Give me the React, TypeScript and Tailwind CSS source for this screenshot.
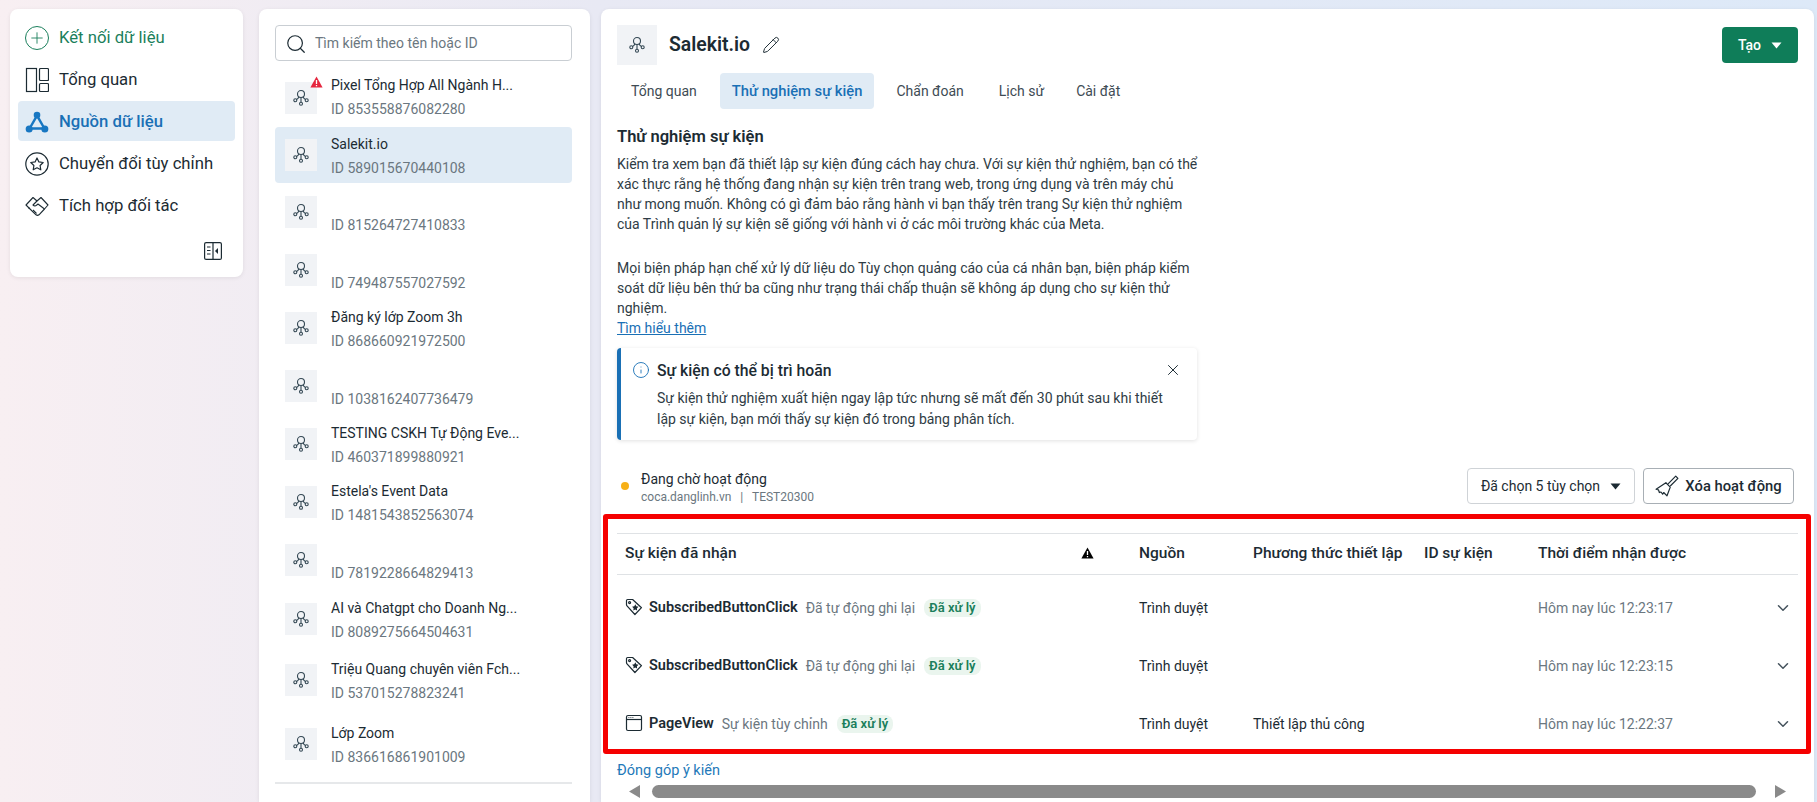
import { ChevronDown, Info, Pencil, Plus, Search, X } from "lucide-react";

const FONT = "font-['Roboto','Noto_Sans',sans-serif]";

const pixels = [
  { name: "Pixel Tổng Hợp All Ngành H...", id: "853558876082280", warn: true, h: "h-[58px]" },
  { name: "Salekit.io", id: "589015670440108", active: true, h: "h-[56px]" },
  { name: "", id: "815264727410833", h: "h-[58px]" },
  { name: "", id: "749487557027592", h: "h-[58px]" },
  { name: "Đăng ký lớp Zoom 3h", id: "868660921972500", h: "h-[58px]" },
  { name: "", id: "1038162407736479", h: "h-[58px]" },
  { name: "TESTING CSKH Tự Động Eve...", id: "460371899880921", h: "h-[58px]" },
  { name: "Estela's Event Data", id: "1481543852563074", h: "h-[58px]" },
  { name: "", id: "7819228664829413", h: "h-[58px]" },
  { name: "AI và Chatgpt cho Doanh Ng...", id: "8089275664504631", h: "h-[60px]" },
  { name: "Triệu Quang chuyên viên Fch...", id: "537015278823241", h: "h-[62px]" },
  { name: "Lớp Zoom", id: "836616861901009", h: "h-[66px]" },
];

const rows = [
  { icon: "tag", name: "SubscribedButtonClick", kind: "Đã tự động ghi lại", setup: "", time: "Hôm nay lúc 12:23:17" },
  { icon: "tag", name: "SubscribedButtonClick", kind: "Đã tự động ghi lại", setup: "", time: "Hôm nay lúc 12:23:15" },
  { icon: "page", name: "PageView", kind: "Sự kiện tùy chỉnh", setup: "Thiết lập thủ công", time: "Hôm nay lúc 12:22:37" },
];

function NodeIcon() {
  return (
    <svg width="18" height="18" viewBox="0 0 18 18" fill="none" stroke="#344854" strokeWidth="1.1">
      <circle cx="9" cy="5" r="3.5" />
      <path d="M7 7.800C6.500 9 6 9.800 4.600 10.500M11 7.800c.5 1.200 1 2 2.400 2.700M9 8.500v4.800" />
      <circle cx="3.300" cy="11.300" r="1.500" />
      <circle cx="14.700" cy="11.300" r="1.500" />
      <circle cx="9" cy="14.800" r="1.500" />
    </svg>
  );
}

function TagIcon() {
  return (
    <svg width="18" height="18" viewBox="0 0 18 18" fill="none" stroke="#1c2b33" strokeWidth="1.2">
      <path d="M1.500 2.600c0-.6.5-1.100 1.100-1.100h5l8.900 8.200-6.600 6.800-7.900-8.600c-.3-.3-.5-.7-.5-1.100z" strokeLinejoin="round" />
      <circle cx="4.600" cy="4.600" r="1" />
      <path d="m10.300 6.200 1 2 2.200.5-1.600 1.500.2 2.200-1.900-.9-1.900 1 .3-2.200-1.500-1.500 2.200-.5z" fill="#1c2b33" stroke="none" />
    </svg>
  );
}

function PageIcon() {
  return (
    <svg width="18" height="18" viewBox="0 0 18 18" fill="none" stroke="#1c2b33" strokeWidth="1.2">
      <rect x="1.500" y="1.500" width="15" height="15" rx="1.500" />
      <path d="M1.500 5.500h15" />
      <path d="M3.500 3.500h.8M5.500 3.500h.8M7.500 3.500h.8" />
    </svg>
  );
}

function NavIcon({ kind }: { kind: string }) {
  if (kind === "overview")
    return (
      <svg width="24" height="26" viewBox="0 0 24 26" fill="none" stroke="#1c2b33" strokeWidth="1.2">
        <rect x="1.500" y="1.500" width="10" height="23" />
        <rect x="14.500" y="1.500" width="9" height="12" rx="1" />
        <rect x="14.500" y="16.500" width="9" height="8" rx="1" />
      </svg>
    );
  if (kind === "source")
    return (
      <svg width="24" height="24" viewBox="0 0 26 24" fill="#1877c2" stroke="#1877c2">
        <path d="M13 5 5 19h16z" fill="none" strokeWidth="2.600" />
        <circle cx="13" cy="4.500" r="3.600" stroke="none" />
        <circle cx="4.500" cy="19.500" r="3.800" stroke="none" />
        <circle cx="21.500" cy="19.500" r="3.800" stroke="none" />
      </svg>
    );
  if (kind === "star")
    return (
      <svg width="24" height="24" viewBox="0 0 24 24" fill="none" stroke="#1c2b33" strokeWidth="1.2">
        <circle cx="12" cy="12" r="11.200" />
        <path d="m12 6 1.900 3.900 4.300.6-3.100 3 .7 4.300-3.800-2-3.800 2 .7-4.300-3.100-3 4.300-.6z" strokeLinejoin="round" />
      </svg>
    );
  return (
    <svg width="24" height="20" viewBox="0 0 24 20" fill="none" stroke="#1c2b33" strokeWidth="1.1" strokeLinejoin="round">
      <path d="M1 9 8 1.500l4 3.500 4-3.500L23 9l-3.500 4L14 18.800c-1 .8-2 .8-3 0L4.500 12.500z" />
      <path d="M12 5 8 9c1.200 1.200 2.500 1.200 3.500.2L13 8l6.500 5" />
      <path d="m4.500 12.500-1-1M8 14l3.500 3.500" />
    </svg>
  );
}

function Sidebar() {
  const item = "flex h-10 items-center gap-[10px] rounded-[4px] pl-[7px] pt-[2px] text-[16.7px]";
  return (
    <aside className="flex h-[268px] w-[233px] shrink-0 flex-col rounded-[8px] bg-white px-[8px] pt-[8px] shadow-[0_1px_4px_rgba(0,0,0,0.08)]">
      <div className={`${item} mb-[2px] text-[#1b7f5c]`}>
        <span className="flex h-6 w-6 items-center justify-center rounded-full border border-[#1b7f5c]">
          <Plus size={18} strokeWidth={1.2} />
        </span>
        Kết nối dữ liệu
      </div>
      <div className={`${item} mb-[2px] text-[#1c2b33]`}>
        <NavIcon kind="overview" />
        Tổng quan
      </div>
      <div className={`${item} mb-[2px] bg-[#e0ebf5] font-medium text-[#1a70b5]`}>
        <NavIcon kind="source" />
        Nguồn dữ liệu
      </div>
      <div className={`${item} mb-[2px] text-[#1c2b33]`}>
        <NavIcon kind="star" />
        Chuyển đổi tùy chỉnh
      </div>
      <div className={`${item} text-[#1c2b33]`}>
        <NavIcon kind="deal" />
        Tích hợp đối tác
      </div>
      <div className="mt-[17px] flex justify-end pr-[13px]">
        <svg width="18" height="18" viewBox="0 0 18 18" fill="none" stroke="#1c2b33" strokeWidth="1.2">
          <rect x="0.600" y="0.600" width="16.800" height="16.800" rx="1.500" />
          <path d="M9 .6v16.800M3 5h3.500M3 8.500h3.500M3 12h3.500" />
          <path d="M14 6v6l-3-3z" fill="#1c2b33" stroke="none" />
        </svg>
      </div>
    </aside>
  );
}

function PixelList() {
  return (
    <section className="h-[793px] w-[331px] shrink-0 rounded-t-[8px] bg-white px-[16px] pt-[16px] shadow-[0_1px_4px_rgba(0,0,0,0.08)]">
      <div className="flex h-[36px] w-[297px] items-center gap-[8px] rounded-[4px] border border-[#c9ced3] px-[9px] pt-px text-[14px] text-[#6b7780]">
        <Search size={22} strokeWidth={1.3} className="text-[#1c2b33]" />
        Tìm kiếm theo tên hoặc ID
      </div>
      <div className="mt-[8px] w-[297px]">
        {pixels.map((p) => (
          <div
            key={p.id}
            className={`flex items-center gap-[14px] rounded-[4px] pl-[10px] ${p.h} ${p.active ? "bg-[#e0ebf5]" : ""}`}
          >
            <div className="relative flex h-[32px] w-[32px] shrink-0 items-center justify-center bg-[#f1f3f6]">
              <NodeIcon />
              {p.warn && (
                <svg className="absolute -right-[6px] -top-[6px]" width="13" height="12" viewBox="0 0 13 12">
                  <path d="M6.500.5 12.600 11.500H.4z" fill="#e5273f" />
                  <path d="M6.500 4v4M6.500 9v1.200" stroke="#fff" strokeWidth="1.300" />
                </svg>
              )}
            </div>
            <div className={`flex h-[44px] flex-col justify-between ${p.warn ? "-mt-[2px]" : "mt-[2px]"}`}>
              <div className="h-[20px] text-[14px] leading-[20px] text-[#1c2b33]">{p.name}</div>
              <div className="text-[14px] leading-[20px] text-[#6b7780]">ID {p.id}</div>
            </div>
          </div>
        ))}
      </div>
      <div className="mt-[5px] h-[2px] w-[297px] bg-[#e6e8ea]" />
    </section>
  );
}

function EventTable() {
  const cols = "grid grid-cols-[456px_58px_114px_171px_114px_244px_16px] items-center";
  return (
    <div className="-ml-[14px] -mr-[13px] mt-[10px] rounded-[3px] border-[5px] border-[#f50000] pb-0 pl-[9px] pr-[8px] pt-[14px]">
      <div className={`${cols} h-[42px] border-y border-[#dfe2e5] pl-[8px] text-[15.5px] font-medium text-[#1c2b33]`}>
        <span>Sự kiện đã nhận</span>
        <span className="-mt-[2px]">
          <svg width="13" height="12" viewBox="0 0 13 12">
            <path d="M6.500.5 12.600 11.500H.4z" fill="#000" />
            <path d="M6.500 4v4M6.500 9v1.200" stroke="#fff" strokeWidth="1.300" />
          </svg>
        </span>
        <span>Nguồn</span>
        <span className="whitespace-nowrap">Phương thức thiết lập</span>
        <span>ID sự kiện</span>
        <span>Thời điểm nhận được</span>
        <span />
      </div>
      <div className="flex flex-col gap-[8px] pt-[8px]">
        {rows.map((r) => (
          <div key={r.time} className={`${cols} h-[50px] pl-[8px] text-[14px]`}>
            <div className="flex items-center">
              <span className="-mt-[2px] mr-[6px] flex w-[18px]">{r.icon === "tag" ? <TagIcon /> : <PageIcon />}</span>
              <span className="text-[14.5px] font-semibold text-[#1c2b33]">{r.name}</span>
              <span className="ml-[8px] text-[#6b7780]">{r.kind}</span>
              <span className="ml-[9px] rounded-[8px] bg-[#eaf5ee] px-[5px] text-[13px] font-semibold leading-[18px] text-[#1b7f5c]">
                Đã xử lý
              </span>
            </div>
            <span />
            <span className="text-[#1c2b33]">Trình duyệt</span>
            <span className="text-[#1c2b33]">{r.setup}</span>
            <span />
            <span className="text-[#6b7780]">{r.time}</span>
            <ChevronDown size={18} strokeWidth={2} className="-ml-[8px] text-[#44525c]" />
          </div>
        ))}
      </div>
    </div>
  );
}

export default function App() {
  return (
    <div
      className={`${FONT} flex h-[802px] gap-[16px] overflow-hidden bg-gradient-to-r from-[#f8eff2] via-[#e8e9f4] via-[33%] to-[#dde9f8] pl-[10px] pt-[9px]`}
    >
      <Sidebar />
      <PixelList />
      <main className="-ml-[5px] h-[793px] w-[1213px] shrink-0 rounded-t-[8px] bg-white pl-[16px] pr-[16px] pt-[16px] shadow-[0_1px_4px_rgba(0,0,0,0.08)]">
        <header className="flex items-start justify-between">
          <div className="flex items-center gap-[12px]">
            <div className="flex h-[40px] w-[40px] items-center justify-center bg-[#f1f3f6]">
              <NodeIcon />
            </div>
            <h1 className="text-[19.4px] font-semibold text-[#1c2b33]">Salekit.io</h1>
            <Pencil size={18} strokeWidth={1.3} className="text-[#1c2b33]" />
          </div>
          <button className="mt-[2px] flex h-[36px] w-[76px] items-center justify-center gap-[10px] rounded-[4px] bg-[#0f7d59] text-[14px] font-medium text-white">
            Tạo
            <svg width="11" height="7" viewBox="0 0 11 7">
              <path d="M.5.5h10L5.500 6.500z" fill="#fff" />
            </svg>
          </button>
        </header>

        <nav className="mt-[8px] flex h-[36px] items-stretch gap-[11px] text-[14px] text-[#3e4b54]">
          <span className="flex items-center pl-[14px] pr-[12px]">Tổng quan</span>
          <span className="-mr-px flex items-center rounded-[4px] bg-[#e0ebf5] px-[12px] text-[14.75px] font-medium text-[#1a70b5]">
            Thử nghiệm sự kiện
          </span>
          <span className="flex items-center px-[12px]">Chẩn đoán</span>
          <span className="flex items-center pl-[12px] pr-[9px]">Lịch sử</span>
          <span className="flex items-center px-[12px]">Cài đặt</span>
        </nav>

        <h2 className="mt-[17px] text-[16.5px] font-semibold leading-[22px] text-[#1c2b33]">Thử nghiệm sự kiện</h2>
        <div className="mt-[6px] w-[590px] text-[14px] leading-[20px] text-[#2f3c45]">
          <p>
            Kiểm tra xem bạn đã thiết lập sự kiện đúng cách hay chưa. Với sự kiện thử nghiệm, bạn có thể
            <br />
            xác thực rằng hệ thống đang nhận sự kiện trên trang web, trong ứng dụng và trên máy chủ
            <br />
            như mong muốn. Không có gì đảm bảo rằng hành vi bạn thấy trên trang Sự kiện thử nghiệm
            <br />
            của Trình quản lý sự kiện sẽ giống với hành vi ở các môi trường khác của Meta.
          </p>
          <p className="mt-[24px]">
            Mọi biện pháp hạn chế xử lý dữ liệu do Tùy chọn quảng cáo của cá nhân bạn, biện pháp kiểm soát dữ liệu bên
            thứ ba cũng như trạng thái chấp thuận sẽ không áp dụng cho sự kiện thử nghiệm.
          </p>
          <a className="text-[#1a70b5] underline">Tìm hiểu thêm</a>
        </div>

        <div className="relative mt-[10px] h-[92px] w-[580px] rounded-[4px] border-l-[4px] border-[#1a70b5] bg-white pl-[36px] pr-[24px] pt-[13px] shadow-[0_1px_4px_rgba(0,0,0,0.12)]">
          <Info size={18} strokeWidth={1.2} className="absolute left-[11px] top-[13px] text-[#1a70b5]" />
          <X size={18} strokeWidth={1.3} className="absolute right-[15px] top-[13px] text-[#1c2b33]" />
          <div className="text-[15.75px] font-medium leading-[20px] text-[#1c2b33]">Sự kiện có thể bị trì hoãn</div>
          <p className="mt-[7px] text-[14px] leading-[21px] text-[#2f3c45]">
            Sự kiện thử nghiệm xuất hiện ngay lập tức nhưng sẽ mất đến 30 phút sau khi thiết lập sự kiện, bạn mới thấy
            sự kiện đó trong bảng phân tích.
          </p>
        </div>

        <div className="mt-[28px] flex h-[36px] items-center justify-between pr-[4px]">
          <div className="flex items-center gap-[12px] pl-[4px]">
            <span className="h-[8px] w-[8px] rounded-full bg-[#f7b017]" />
            <div className="mt-[3px]">
              <div className="text-[14px] leading-[20px] text-[#1c2b33]">Đang chờ hoạt động</div>
              <div className="text-[12px] leading-[17px] text-[#6b7780]">coca.danglinh.vn &nbsp;&nbsp;|&nbsp;&nbsp; TEST20300</div>
            </div>
          </div>
          <div className="flex gap-[8px]">
            <button className="flex h-[36px] w-[168px] items-center justify-center gap-[10px] rounded-[4px] border border-[#cfd3d7] text-[14px] text-[#1c2b33]">
              Đã chọn 5 tùy chọn
              <svg width="11" height="7" viewBox="0 0 11 7">
                <path d="M.5.5h10L5.500 6.500z" fill="#1c2b33" />
              </svg>
            </button>
            <button className="flex h-[36px] w-[151px] items-center justify-center gap-[6px] rounded-[4px] border border-[#a8afb5] text-[14.75px] font-medium text-[#1c2b33]">
              <svg width="24" height="22" viewBox="0 0 22 20" fill="none" stroke="#1c2b33" strokeWidth="1.1" strokeLinejoin="round">
                <path d="m10 7 4 4-3 8-3-3-1 1.500-1.500-2L4 16l-.8-2.500L1 13z" />
                <path d="m12 8 7-7 2 2-7 7" />
              </svg>
              Xóa hoạt động
            </button>
          </div>
        </div>

        <EventTable />

        <a className="mt-[7px] block text-[14.5px] leading-[20px] text-[#2379b9]">Đóng góp ý kiến</a>
        <div className="mt-[4px] flex h-[13px] items-center">
          <svg className="ml-[12px]" width="11" height="13" viewBox="0 0 11 13">
            <path d="M11 0v13L0 6.500z" fill="#8a8a8a" />
          </svg>
          <div className="ml-[12px] h-[13px] w-[1104px] rounded-full bg-[#8a8a8a]" />
          <svg className="ml-[19px]" width="11" height="13" viewBox="0 0 11 13">
            <path d="M0 0v13l11-6.500z" fill="#8a8a8a" />
          </svg>
        </div>
      </main>
    </div>
  );
}
